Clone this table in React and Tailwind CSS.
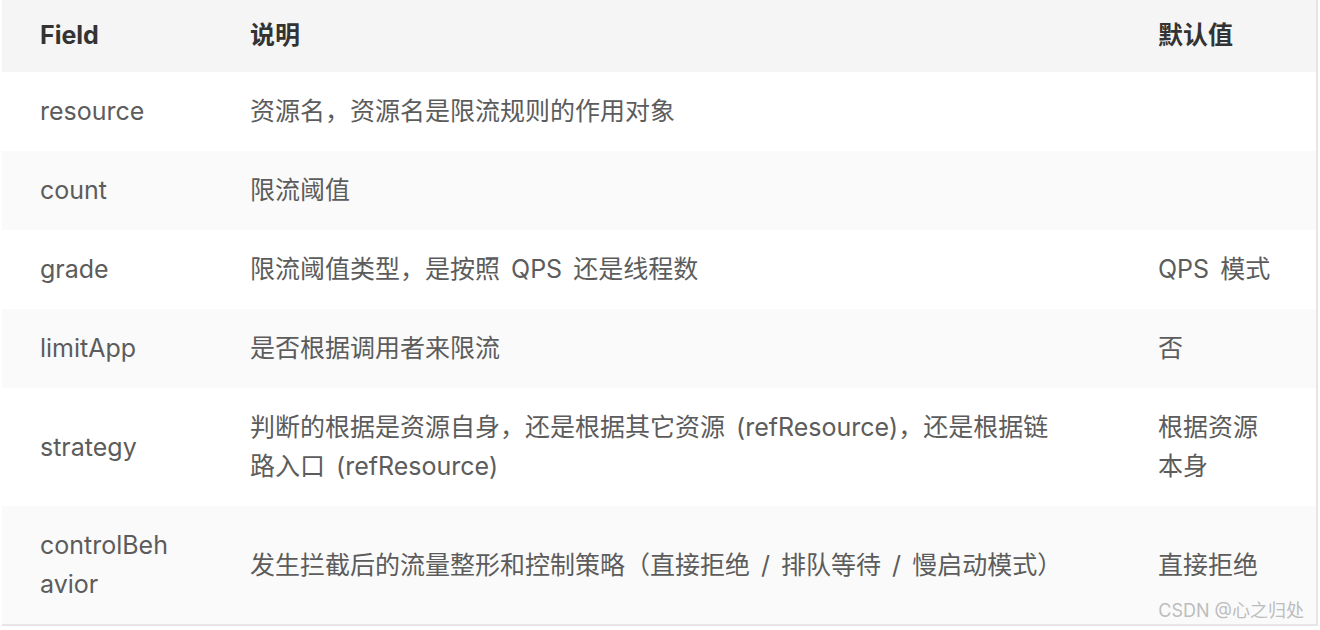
import React from "react";

const rows = [
  { field: "resource", desc: "资源名，资源名是限流规则的作用对象", def: "" },
  { field: "count", desc: "限流阈值", def: "" },
  { field: "grade", desc: "限流阈值类型，是按照 QPS 还是线程数", def: "QPS 模式" },
  { field: "limitApp", desc: "是否根据调用者来限流", def: "否" },
  {
    field: "strategy",
    desc: "判断的根据是资源自身，还是根据其它资源 (refResource)，还是根据链路入口 (refResource)",
    def: "根据资源本身",
  },
  {
    field: "controlBehavior",
    desc: "发生拦截后的流量整形和控制策略（直接拒绝 / 排队等待 / 慢启动模式）",
    def: "直接拒绝",
  },
];

const font = {
  fontFamily: '"Inter", "Noto Sans CJK SC", sans-serif',
};

const App = () => {
  return (
    <div className="w-[1320px] h-[630px] bg-white overflow-hidden" style={font}>
      <div className="relative ml-[2px] w-[1316px] border-r-2 border-b-2 border-[#e6e6e6]">
        <div className="grid grid-cols-[210px_908px_1fr] h-[72px] bg-[#f5f5f5] text-[25px] font-bold text-[#333]">
          <div className="flex items-center pl-[38px]">Field</div>
          <div className="flex items-center pl-[38px]">说明</div>
          <div className="flex items-center pl-[38px]">默认值</div>
        </div>
        {rows.map((r, i) => (
          <div
            key={r.field}
            className={
              "grid grid-cols-[210px_908px_1fr] text-[25px] leading-[39px] text-[#5c5c5c] [word-spacing:4px] " +
              (i % 2 === 1 ? "bg-[#fafafa]" : "bg-white")
            }
          >
            <div className="flex items-center pl-[38px] pr-[38px] py-[20px] break-all">
              {r.field}
            </div>
            <div className="flex items-center pl-[38px] pr-[50px] py-[20px]">
              {r.desc}
            </div>
            <div className="flex items-center pl-[38px] pr-[38px] py-[20px]">
              {r.def}
            </div>
          </div>
        ))}
        <div className="absolute right-[12px] bottom-[3px] text-[18px] leading-[20px] text-[#bdbdbd]">
          CSDN @心之归处
        </div>
      </div>
    </div>
  );
};

export default App;
